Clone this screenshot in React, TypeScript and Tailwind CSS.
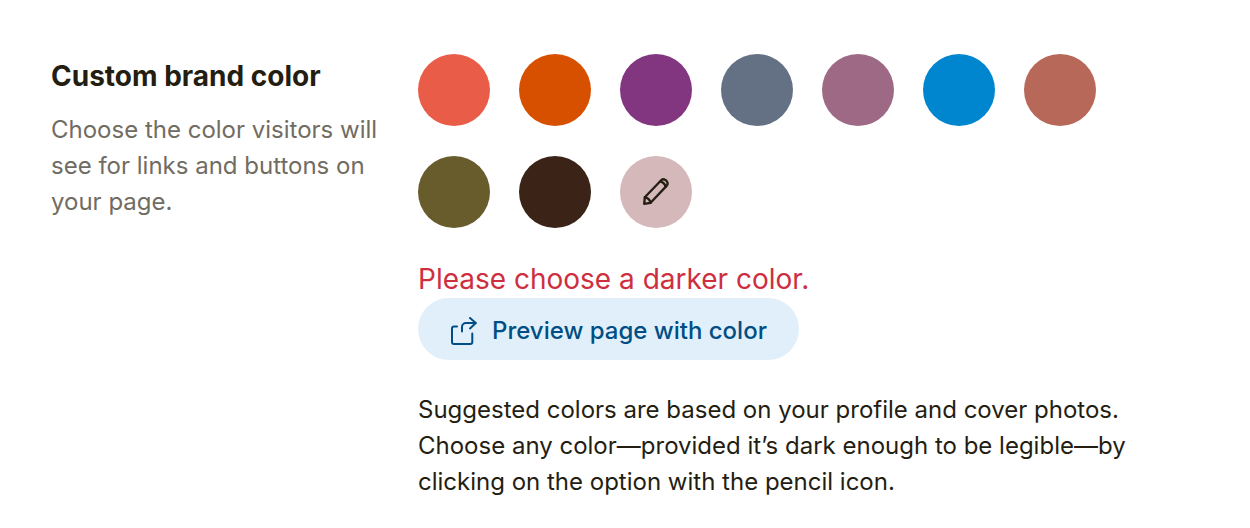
import { useState } from "react";

const colors = [
  { name: "Coral", bg: "bg-[#e95c48]" },
  { name: "Orange", bg: "bg-[#d75000]" },
  { name: "Purple", bg: "bg-[#823680]" },
  { name: "Slate", bg: "bg-[#647184]" },
  { name: "Mauve", bg: "bg-[#9d6984]" },
  { name: "Blue", bg: "bg-[#0085cf]" },
  { name: "Clay", bg: "bg-[#b76858]" },
  { name: "Olive", bg: "bg-[#695c2c]" },
  { name: "Brown", bg: "bg-[#3b2417]" },
];

function PencilIcon() {
  return (
    <svg
      width="28"
      height="28"
      viewBox="0 0 28 28"
      fill="none"
      stroke="currentColor"
      strokeWidth="2.3"
      strokeLinecap="round"
      strokeLinejoin="round"
      aria-hidden="true"
    >
      <path d="M2.2 25.8 L2.8 19.3 L19.2 2.2 Q21.6 0.2 24 2.4 Q26.8 5 24.8 7.6 L8.6 24.8 Z" />
      <path d="M2.8 19.3 Q7.6 20.2 8.6 24.8" />
      <path d="M18.4 3.4 Q22.6 4.6 23.6 8.8" />
    </svg>
  );
}

function ShareIcon() {
  return (
    <svg
      width="28"
      height="28"
      viewBox="0 0 28 28"
      fill="none"
      stroke="currentColor"
      strokeWidth="2"
      strokeLinecap="round"
      strokeLinejoin="round"
      aria-hidden="true"
    >
      <path d="M7 9.5H4a2 2 0 0 0-2 2V25a2 2 0 0 0 2 2h16.3a2 2 0 0 0 2-2v-8.5" />
      <path d="M12 14.5V10a4 4 0 0 1 4-4h9.5" />
      <path d="M20 1l5.8 5L20 11.4" />
    </svg>
  );
}

export default function App() {
  const [selected, setSelected] = useState("");

  return (
    <section className="flex items-start bg-white pt-[54px] pr-[100px] pb-7 pl-[51px] font-['Inter',sans-serif] text-[#241e12]">
      {/* Heading */}
      <div className="w-[367px] shrink-0 pt-1">
        <h2 className="text-[28px] leading-9 font-bold">Custom brand color</h2>
        <p className="mt-[18px] max-w-[340px] text-2xl leading-9 text-[#716c62]">
          Choose the color visitors will see for links and buttons on your page.
        </p>
      </div>

      <div className="min-w-0 flex-1">
        {/* Swatches */}
        <div
          role="radiogroup"
          aria-label="Custom brand color"
          className="flex flex-wrap gap-x-[29px] gap-y-[30px]"
        >
          {colors.map((color) => (
            <input
              key={color.name}
              type="radio"
              name="brand-color"
              aria-label={color.name}
              checked={selected === color.name}
              onChange={() => setSelected(color.name)}
              className={`size-[72px] cursor-pointer appearance-none rounded-full ${color.bg}`}
            />
          ))}
          <button
            type="button"
            aria-label="Choose your own color"
            className="flex size-[72px] cursor-pointer items-center justify-center rounded-full bg-[#d4b8ba]"
          >
            <PencilIcon />
          </button>
        </div>

        <p role="alert" className="mt-8 text-[28px] leading-[38px] text-[#ce2f40]">
          Please choose a darker color.
        </p>

        <button
          type="button"
          className="flex h-[62px] cursor-pointer items-center gap-[14px] rounded-full bg-[#e1effb] px-8 pt-1 text-2xl font-medium text-[#004e84]"
        >
          <ShareIcon />
          Preview page with color
        </button>

        <p className="mt-8 text-2xl leading-9">
          Suggested colors are based on your profile and cover photos. Choose
          any color—provided it’s dark enough to be legible—by clicking on the
          option with the pencil icon.
        </p>
      </div>
    </section>
  );
}
